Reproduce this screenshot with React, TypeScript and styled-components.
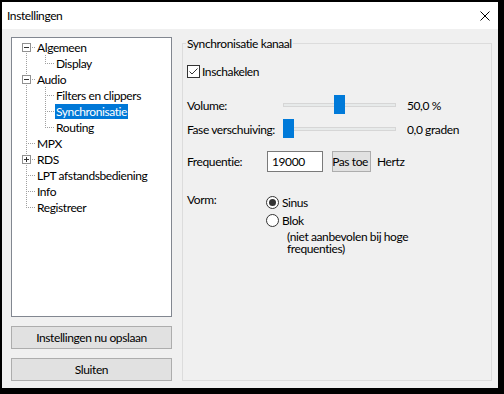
import styled, { createGlobalStyle } from "styled-components";

const GlobalStyle = createGlobalStyle`
  html, body {
    margin: 0;
    padding: 0;
    background: #000;
  }
  body {
    font-family: "Segoe UI", Lato, "Noto Sans", sans-serif;
    font-size: 12px;
    letter-spacing: -0.4px;
    color: #000;
  }
`;

const Screen = styled.div`
  width: 504px;
  height: 394px;
  box-sizing: border-box;
  padding: 2px 6px 6px 2px;
  background: #000;
`;
const Window = styled.div`
  width: 496px;
  height: 386px;
  display: flex;
  flex-direction: column;
  background: #f0f0f0;
`;
const TitleBar = styled.div`
  height: 27px;
  flex: none;
  background: #fff;
  display: flex;
  align-items: center;
  justify-content: space-between;
  padding: 0 8px 0 5px;
`;
const Body = styled.div`
  flex: 1;
  display: flex;
  gap: 10px;
  padding: 8px 6px 7px 9px;
  min-height: 0;
`;
const LeftColumn = styled.div`
  width: 161px;
  display: flex;
  flex-direction: column;
  gap: 9px;
`;
const Tree = styled.div`
  height: 280px;
  box-sizing: border-box;
  border: 1px solid #828790;
  background: #fff;
  padding: 1px 0 0 5px;
`;
const TreeRow = styled.div`
  height: 16px;
  display: flex;
  align-items: center;
`;
const dots = "#a0a0a0";
const Guide = styled.span<{ $kind: string }>`
  position: relative;
  width: 19px;
  height: 16px;
  flex: none;
  &::before {
    content: "";
    display: ${({ $kind }) => ($kind === "blank" ? "none" : "block")};
    position: absolute;
    left: 9px;
    width: 1px;
    top: ${({ $kind }) => ($kind === "first" ? "8px" : "0")};
    bottom: ${({ $kind }) => ($kind === "corner" ? "8px" : "0")};
    background: repeating-linear-gradient(to bottom, ${dots} 0 1px, transparent 1px 2px);
  }
  &::after {
    content: "";
    display: ${({ $kind }) => ($kind === "pipe" || $kind === "blank" ? "none" : "block")};
    position: absolute;
    top: 8px;
    left: 9px;
    right: 0;
    height: 1px;
    background: repeating-linear-gradient(to right, ${dots} 0 1px, transparent 1px 2px);
  }
`;
const Expander = styled.span<{ $open: boolean }>`
  position: absolute;
  z-index: 1;
  left: 5px;
  top: 4px;
  width: 9px;
  height: 9px;
  box-sizing: border-box;
  border: 1px solid #919191;
  background: #fff;
  &::before {
    content: "";
    position: absolute;
    left: 1px;
    top: 3px;
    width: 5px;
    height: 1px;
    background: #333;
  }
  &::after {
    content: "";
    display: ${({ $open }) => ($open ? "none" : "block")};
    position: absolute;
    left: 3px;
    top: 1px;
    width: 1px;
    height: 5px;
    background: #333;
  }
`;
const TreeLabel = styled.span<{ $selected?: boolean }>`
  height: 15px;
  line-height: 15px;
  padding: 0 1px;
  white-space: nowrap;
  background: ${({ $selected }) => ($selected ? "#0078d7" : "transparent")};
  color: ${({ $selected }) => ($selected ? "#fff" : "#000")};
`;
const Button = styled.button<{ $align?: string }>`
  height: 23px;
  box-sizing: border-box;
  border: 1px solid #adadad;
  background: #e1e1e1;
  font: inherit;
  letter-spacing: inherit;
  color: #000;
  padding: 0;
  display: flex;
  align-items: center;
  justify-content: ${({ $align }) => $align || "center"};
  overflow: hidden;
  white-space: nowrap;
`;
const Group = styled.fieldset`
  flex: 1;
  min-width: 0;
  margin: 0;
  padding: 0 0 0 4px;
  border: 1px solid #dcdcdc;
`;
const Legend = styled.legend`
  margin-left: -1px;
  padding: 0 1px;
  line-height: 13px;
`;
const Content = styled.div`
  padding-top: 11px;
  display: flex;
  flex-direction: column;
`;
const Row = styled.div<{ $h: number; $mt?: number }>`
  height: ${({ $h }) => $h}px;
  margin-top: ${({ $mt }) => $mt || 0}px;
  display: flex;
  align-items: center;
  white-space: nowrap;
`;
const Label = styled.span<{ $w: number }>`
  width: ${({ $w }) => $w}px;
  flex: none;
`;
const CheckBox = styled.span`
  width: 13px;
  height: 13px;
  box-sizing: border-box;
  border: 1px solid #333;
  background: #fff;
  margin-right: 2px;
  display: flex;
`;
const Track = styled.div`
  position: relative;
  width: 113px;
  height: 24px;
  flex: none;
  display: flex;
  align-items: center;
  &::before {
    content: "";
    flex: 1;
    height: 4px;
    box-sizing: border-box;
    background: #e7eaea;
    border: 1px solid #d6d6d6;
  }
`;
const Thumb = styled.span`
  position: absolute;
  top: 2px;
  width: 11px;
  height: 19px;
  background: #007ad9;
`;
const Value = styled.span`
  margin-left: 11px;
`;
const Input = styled.div`
  width: 56px;
  height: 21px;
  box-sizing: border-box;
  border: 1px solid #7a7a7a;
  background: #fff;
  padding-left: 4px;
  display: flex;
  align-items: center;
`;
const SmallButton = styled(Button)`
  width: 39px;
  height: 21px;
  margin-left: 9px;
  padding-right: 2px;
`;
const Unit = styled.span`
  margin-left: 6px;
`;
const ShapeBlock = styled.div`
  margin-top: 21px;
  display: flex;
  align-items: flex-start;
`;
const ShapeLabel = styled.span`
  width: 79px;
  flex: none;
  line-height: 13px;
`;
const Options = styled.div`
  display: flex;
  flex-direction: column;
`;
const Radio = styled.span<{ $on?: boolean }>`
  width: 13px;
  height: 13px;
  box-sizing: border-box;
  border: 1px solid #333;
  border-radius: 50%;
  background: #fff;
  margin-right: 3px;
  display: flex;
  align-items: center;
  justify-content: center;
  &::after {
    content: "";
    display: ${({ $on }) => ($on ? "block" : "none")};
    width: 7px;
    height: 7px;
    border-radius: 50%;
    background: #333;
  }
`;
const Note = styled.div`
  padding-left: 21px;
  margin-top: 2px;
  line-height: 12px;
`;

const treeRows = [
  { label: "Algemeen", guides: ["first"], box: "minus" },
  { label: "Display", guides: ["pipe", "corner"] },
  { label: "Audio", guides: ["tee"], box: "minus" },
  { label: "Filters en clippers", guides: ["pipe", "tee"] },
  { label: "Synchronisatie", guides: ["pipe", "tee"], selected: true },
  { label: "Routing", guides: ["pipe", "corner"] },
  { label: "MPX", guides: ["tee"] },
  { label: "RDS", guides: ["tee"], box: "plus" },
  { label: "LPT afstandsbediening", guides: ["tee"] },
  { label: "Info", guides: ["tee"] },
  { label: "Registreer", guides: ["corner"] },
];

const sliders = [
  { label: "Volume:", value: 0.5, text: "50,0 %" },
  { label: "Fase verschuiving:", value: 0, text: "0,0 graden" },
];

export default function App() {
  return (
    <Screen>
      <GlobalStyle />
      <Window>
        <TitleBar>
          <span>Instellingen</span>
          <svg width="10" height="10" viewBox="0 0 10 10">
            <path d="M0.5 0.5 L9.5 9.5 M9.5 0.5 L0.5 9.5" stroke="#000" strokeWidth="1" />
          </svg>
        </TitleBar>
        <Body>
          <LeftColumn>
            <Tree>
              {treeRows.map((r) => (
                <TreeRow key={r.label}>
                  {r.guides.map((g, i) => (
                    <Guide key={i} $kind={g}>
                      {r.box && i === r.guides.length - 1 && (
                        <Expander $open={r.box === "minus"} />
                      )}
                    </Guide>
                  ))}
                  <TreeLabel $selected={r.selected}>{r.label}</TreeLabel>
                </TreeRow>
              ))}
            </Tree>
            <Button>Instellingen nu opslaan</Button>
            <Button>Sluiten</Button>
          </LeftColumn>
          <Group>
            <Legend>Synchronisatie kanaal</Legend>
            <Content>
              <Row $h={20}>
                <CheckBox>
                  <svg width="11" height="11" viewBox="0 0 11 11">
                    <polyline points="1.5,5.5 4,8 9.5,2.5" fill="none" stroke="#333" strokeWidth="1" />
                  </svg>
                </CheckBox>
                Inschakelen
              </Row>
              {sliders.map((s, i) => (
                <Row key={s.label} $h={24} $mt={i === 0 ? 12 : 0}>
                  <Label $w={96}>{s.label}</Label>
                  <Track>
                    <Thumb style={{ left: Math.round(s.value * 102) }} />
                  </Track>
                  <Value>{s.text}</Value>
                </Row>
              ))}
              <Row $h={22} $mt={9}>
                <Label $w={80}>Frequentie:</Label>
                <Input>19000</Input>
                <SmallButton $align="flex-end">Pas toe</SmallButton>
                <Unit>Hertz</Unit>
              </Row>
              <ShapeBlock>
                <ShapeLabel>Vorm:</ShapeLabel>
                <Options>
                  <Row $h={18}>
                    <Radio $on />
                    Sinus
                  </Row>
                  <Row $h={18}>
                    <Radio />
                    Blok
                  </Row>
                  <Note>
                    (niet aanbevolen bij hoge
                    <br />
                    frequenties)
                  </Note>
                </Options>
              </ShapeBlock>
            </Content>
          </Group>
        </Body>
      </Window>
    </Screen>
  );
}
